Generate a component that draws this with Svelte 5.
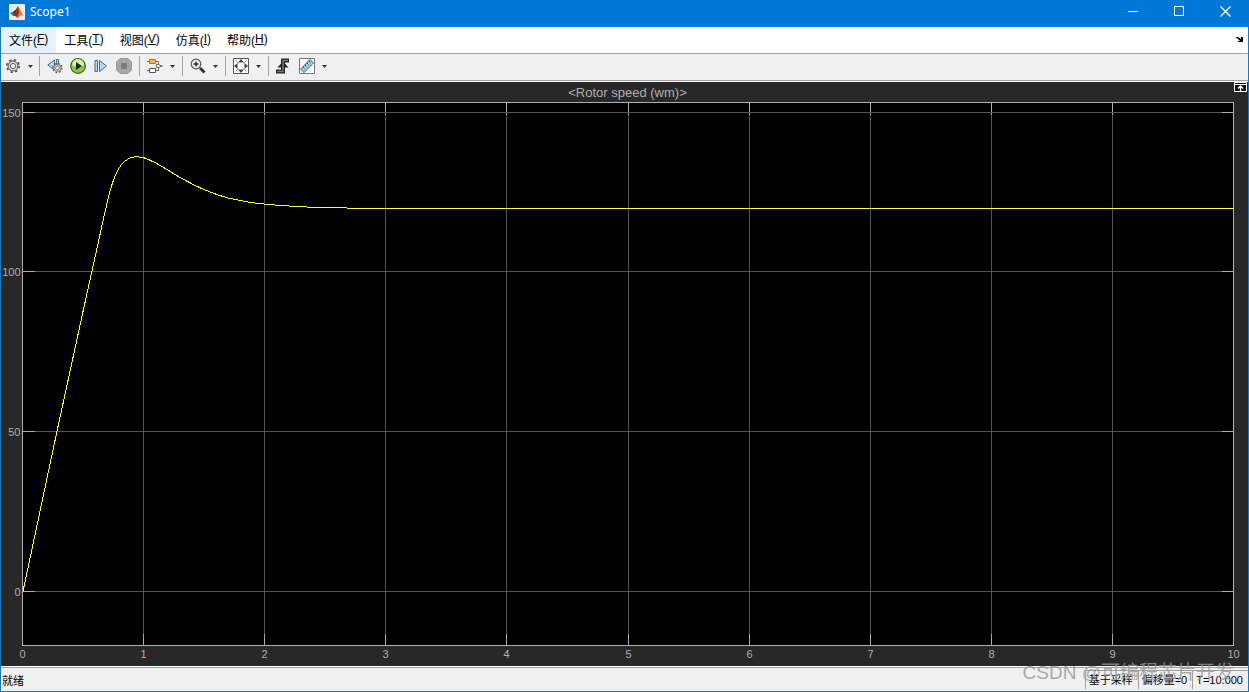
<script>
  const menus = [
    { label: "文件", key: "F" },
    { label: "工具", key: "T" },
    { label: "视图", key: "V" },
    { label: "仿真", key: "I" },
    { label: "帮助", key: "H" },
  ];

  const xTicks = [0, 1, 2, 3, 4, 5, 6, 7, 8, 9, 10];
  const yTicks = [0, 50, 100, 150];
  const yMin = -17;
  const yMax = 153;

  // [time, rotor speed]
  const samples = [
    [0, 0], [0.28, 50], [0.495, 87.5], [0.567, 99.8], [0.658, 115.5],
    [0.713, 124.4], [0.754, 129.4], [0.81, 133.4], [0.878, 135.6],
    [0.933, 136], [1, 135.7], [1.1, 134], [1.195, 131.9], [1.305, 129.4],
    [1.47, 126.2], [1.66, 123.5], [1.855, 121.9], [2, 121.2], [2.13, 120.8],
    [2.35, 120.3], [2.78, 119.9], [4, 119.9], [10, 119.9],
  ];

  let width = $state(1247);
  let height = $state(583);

  const left = 21;
  const top = 20;
  const tick = 12;
  let right = $derived(width - 15);
  let bottom = $derived(height - 21);

  const sx = (v) => Math.round(left + (v / 10) * (right - left));
  const sy = (v) => bottom - ((v - yMin) / (yMax - yMin)) * (bottom - top);

  // Catmull-Rom spline through the samples
  function curve() {
    const p = samples.map(([t, v]) => [
      left + (t / 10) * (right - left) + 1,
      sy(v) + 0.6,
    ]);
    let d = `M${p[0]}`;
    for (let i = 0; i < p.length - 1; i++) {
      const a = p[i - 1] ?? p[i];
      const b = p[i];
      const c = p[i + 1];
      const e = p[i + 2] ?? c;
      if (i < 3 || i > 18) {
        d += `L${c}`;
        continue;
      }
      d += `C${b[0] + (c[0] - a[0]) / 6},${b[1] + (c[1] - a[1]) / 6} `;
      d += `${c[0] - (e[0] - b[0]) / 6},${c[1] - (e[1] - b[1]) / 6} ${c}`;
    }
    return d;
  }

  let trace = $derived(curve());
</script>

{#snippet gear()}
  <circle cx="8" cy="8" r="6.200" fill="none" stroke="#555" stroke-width="1.600" stroke-dasharray="2.4 2.470" />
  <circle cx="8" cy="8" r="5" fill="#d4d4d4" stroke="#555" />
  <circle cx="8" cy="8" r="2.500" fill="#fff" stroke="#555" />
{/snippet}

{#snippet drop(label)}
  <button class="drop" aria-label={label}>
    <svg width="5" height="3" viewBox="0 0 5 3"><path d="M0 0h5L2.5 3z" fill="#333" /></svg>
  </button>
{/snippet}

<div class="window">
  <header class="titlebar">
    <svg class="logo" width="16" height="16" viewBox="0 0 16 16">
      <rect width="16" height="16" rx="1" fill="#eee" />
      <path d="M1 9l4-2 2 2-3 3z" fill="#2f7fb5" />
      <path d="M5 7c2-1 3-4 4-5l-2 8-3 2z" fill="#6a2c2a" />
      <path d="M9 2c2 2 3 7 6 10-2-1-3-1-4 0s-2 2-3 2c0-2-2-2-4-2 3-1 4-5 5-10z" fill="#e8743a" />
      <path d="M9 2l1 6-2 6c0-2-2-2-4-2 3-1 4-5 5-10z" fill="#9c2b1a" />
    </svg>
    <h1>Scope1</h1>
    <div class="window-buttons">
      <button aria-label="Minimize">
        <svg width="11" height="11" viewBox="0 0 11 11"><path d="M0 5.5h10" /></svg>
      </button>
      <button aria-label="Maximize">
        <svg width="11" height="11" viewBox="0 0 11 11"><path d="M.5.5h9v9h-9z" /></svg>
      </button>
      <button aria-label="Close">
        <svg width="11" height="11" viewBox="0 0 11 11"><path d="M.5.5l10 10M10.5.5l-10 10" stroke-width="1.300" /></svg>
      </button>
    </div>
  </header>

  <nav class="menubar">
    {#each menus as menu, i}
      <button class:active={i === 0}>{menu.label}(<u>{menu.key}</u>)</button>
    {/each}
    <button class="dock" aria-label="Dock">
      <svg width="7" height="6" viewBox="0 0 7 6">
        <path d="M0 1h2l3 2V1h2v5H2V5h2L1 2H0z" fill="#000" />
      </svg>
    </button>
  </nav>

  <div class="toolbar">
    <div class="group">
      <button aria-label="Configuration">
        <svg width="16" height="16" viewBox="0 0 16 16">{@render gear()}</svg>
      </button>
      {@render drop("Configuration options")}
    </div>
    <div class="group run">
      <button aria-label="Step back options">
        <svg width="16" height="16" viewBox="0 0 16 16">
          <path d="M7.500 2v10L.8 7z" fill="#b8d8ea" stroke="#46708c" />
          <path d="M9.500 1.500h2v11h-2z" fill="#b8d8ea" stroke="#46708c" />
          <g transform="translate(4.500 4) scale(.74)">{@render gear()}</g>
        </svg>
      </button>
      <button aria-label="Run">
        <svg width="16" height="16" viewBox="0 0 16 16">
          <circle cx="8" cy="8" r="7.300" fill="#91c73d" stroke="#3f661d" stroke-width="1.200" />
          <path d="M2 7a6 6 0 0 1 12 0q-6 3-12 0z" fill="#d9eeb5" />
          <path d="M6 4l6 4-6 4z" fill="#1d2b12" />
        </svg>
      </button>
      <button aria-label="Step forward">
        <svg width="16" height="16" viewBox="0 0 16 16">
          <path d="M2 2.500h2.500v11H2zM6.500 2.500l7 5.500-7 5.500z" fill="#b7dcf0" stroke="#3c6f95" />
        </svg>
      </button>
      <button aria-label="Stop" disabled>
        <svg width="16" height="16" viewBox="0 0 16 16">
          <path d="M4 .5h8L15.500 4v8L12 15.500H4L.5 12V4z" fill="#a6a6a6" stroke="#999" />
          <path d="M5 5h6v6H5z" fill="#7c7c7c" />
        </svg>
      </button>
    </div>
    <div class="group">
      <button aria-label="Highlight block">
        <svg width="16" height="16" viewBox="0 0 16 16">
          <path d="M0 3.500h2M8 3.500h3.500v3M0 12.500h2M8 12.500h3.500v-3M14 8h2" fill="none" stroke="#666" />
          <path d="M2.500 1.500h6v4h-6z" fill="#f9b55b" stroke="#d4660c" />
          <path d="M2.500 10.500h6v4h-6z" fill="#fff" stroke="#555" />
          <path d="M9.500 6.500h2l3 1.500-3 1.500h-2z" fill="#fff" stroke="#666" />
        </svg>
      </button>
      {@render drop("Signal options")}
    </div>
    <div class="group">
      <button aria-label="Zoom">
        <svg width="16" height="16" viewBox="0 0 16 16">
          <circle cx="6" cy="6" r="4.800" fill="#e9f3f7" stroke="#555" stroke-width="1.200" />
          <path d="M6 3.500v5M3.500 6h5" stroke="#222" stroke-width="1.400" />
          <path d="M10 10l4.500 4.500" stroke="#333" stroke-width="2.800" />
        </svg>
      </button>
      {@render drop("Zoom options")}
    </div>
    <div class="group">
      <button aria-label="Fit to view">
        <svg width="16" height="16" viewBox="0 0 16 16">
          <path d="M.5.5h15v15H.5z" fill="#fff" stroke="#555" />
          <path d="M8 1l3 3.500H5zM8 15l3-3.500H5zM1 8l3.500-3v6zM15 8l-3.500-3v6z" fill="#444" />
          <path d="M2.500 2.500l3 3M13.500 2.500l-3 3M2.500 13.500l3-3M13.500 13.500l-3-3" stroke="#999" />
        </svg>
      </button>
      {@render drop("Scale options")}
    </div>
    <div class="group tools">
      <button aria-label="Triggers">
        <svg width="16" height="16" viewBox="0 0 16 16">
          <path d="M1 13.500h7v-11h6" fill="none" stroke="#222" stroke-width="4" />
          <path d="M8 3.500L13.500 9.500h-11z" fill="#222" />
          <path d="M2 13.500h6v-11h5" fill="none" stroke="#777" stroke-width="1.500" />
        </svg>
      </button>
      <button aria-label="Measurements">
        <svg width="16" height="16" viewBox="0 0 16 16">
          <path d="M.5.5h15v15H.5z" fill="#fff" stroke="#777" />
          <path d="M11 1.500L14.500 5 5 14.500 1.500 11z" fill="#a3cfe2" stroke="#35657f" />
          <path d="M4 9l1.500 1.500M6 7l1.500 1.500M8 5l1.500 1.500M10 3l1.500 1.500" stroke="#24516a" />
        </svg>
      </button>
      {@render drop("Measurement options")}
    </div>
  </div>

  <main class="scope" bind:clientWidth={width} bind:clientHeight={height}>
    <svg class="plot" {width} {height} role="img" aria-label="Rotor speed">
      <rect x={left} y={top} width={right - left} height={bottom - top} />
      <g transform="translate(.5 .5)">
        {#each xTicks as t}
          <path class="grid" d="M{sx(t)} {top}V{bottom}" />
          <path class="axis" d="M{sx(t)} {top}v{tick}M{sx(t)} {bottom}v-{tick}" />
          <text x={sx(t)} y={bottom + 12} text-anchor="middle">{t}</text>
        {/each}
        {#each yTicks as v}
          <path class="grid" d="M{left} {Math.round(sy(v))}H{right}" />
          <path class="axis" d="M{left} {Math.round(sy(v))}h{tick}M{right} {Math.round(sy(v))}h-{tick}" />
          <text x={left - 2} y={Math.round(sy(v)) + 4} text-anchor="end">{v}</text>
        {/each}
        <path class="axis" d="M{left} {top}H{right}V{bottom}H{left}z" />
      </g>
      <path class="trace" d={trace} />
      <text class="title" x={(left + right) / 2} y="15" text-anchor="middle">&lt;Rotor speed (wm)&gt;</text>
    </svg>
    <button class="maximize-axes" aria-label="Maximize axes">
      <svg width="13" height="11" viewBox="0 0 13 11">
        <path d="M.5.5h12v9H.5zM0 2.500h13" fill="#111" stroke="#fff" />
        <path d="M6.500 9V4M4 6.500L6.500 4 9 6.500" fill="none" stroke="#fff" stroke-width="1.300" />
      </svg>
    </button>
  </main>

  <footer class="statusbar">
    <span class="ready">就绪</span>
    <span class="cell">基于采样</span>
    <span class="cell">偏移量=0</span>
    <span class="cell">T=10.000</span>
    <span class="watermark">CSDN @可编程芯片开发</span>
  </footer>
</div>

<style>
  :global(body) {
    margin: 0;
    background: #282828;
  }

  .window {
    display: flex;
    flex-direction: column;
    box-sizing: border-box;
    min-height: 100vh;
    border: 1px solid #1879bd;
    border-top: none;
    font-family: "Liberation Sans", "Noto Sans CJK SC", sans-serif;
    font-size: 12px;
    color: #000;
  }

  button {
    display: flex;
    align-items: center;
    justify-content: center;
    padding: 0;
    border: none;
    background: transparent;
    font: inherit;
    color: inherit;
  }

  svg {
    display: block;
  }

  .titlebar {
    display: flex;
    align-items: center;
    box-sizing: border-box;
    height: 27px;
    margin: 0 -1px;
    padding: 0 1px 4px 9px;
    background: #0078d7;
    color: #fff;
  }

  .titlebar h1 {
    flex: 1;
    margin: 0 0 0 5px;
    font-family: "Noto Sans", sans-serif;
    font-size: 12px;
    font-weight: 400;
  }

  .window-buttons {
    display: flex;
    height: 23px;
  }

  .window-buttons button {
    width: 46px;
  }

  .window-buttons path {
    fill: none;
    stroke: #fff;
  }

  .menubar {
    display: flex;
    height: 26px;
    background: #fff;
    border-bottom: 1px solid #a0a0a0;
  }

  .menubar button {
    padding: 0 8px 2px;
  }

  .menubar .active {
    background: #e5f3ff;
  }

  .menubar .dock {
    margin-left: auto;
    padding: 0 5px 2px;
  }

  .toolbar {
    display: flex;
    align-items: center;
    box-sizing: border-box;
    height: 27px;
    padding-bottom: 2px;
    background: #f0f0f0;
    border-bottom: 1px solid #a0a0a0;
    box-shadow: 0 1px #fff;
    margin-bottom: 1px;
  }

  .group {
    display: flex;
    align-items: center;
    height: 20px;
    padding: 0 4px 0 7px;
    border-right: 1px solid #a0a0a0;
  }

  .group:first-child {
    padding: 0 3px 0 4px;
  }

  .group.run {
    gap: 7px;
    padding-right: 7px;
  }

  .group.tools {
    padding-left: 6px;
    border-right: none;
  }

  .tools button + button:not(.drop) {
    margin-left: 8px;
  }

  .drop {
    width: 15px;
    height: 16px;
    padding-left: 3px;
  }

  .scope {
    position: relative;
    flex: 1;
    min-height: 240px;
    overflow: hidden;
    background: #282828;
  }

  .plot {
    position: absolute;
    inset: 0;
  }

  .plot text {
    fill: #afafaf;
    font-size: 11px;
  }

  .plot .title {
    font-size: 13px;
  }

  .grid,
  .axis,
  .trace {
    fill: none;
    shape-rendering: crispEdges;
  }

  .grid {
    stroke: #555;
  }

  .axis {
    stroke: #afafaf;
  }

  .trace {
    stroke: #ffff3c;
  }

  .maximize-axes {
    position: absolute;
    top: 0;
    right: 1px;
  }

  .statusbar {
    position: relative;
    display: flex;
    align-items: center;
    height: 23px;
    background: #f0f0f0;
    border-top: 1px solid #a0a0a0;
    box-shadow: 0 -1px #fff;
    margin-top: 1px;
    font-size: 11px;
  }

  .ready {
    flex: 1;
    padding-left: 1px;
  }

  .cell {
    height: 18px;
    line-height: 18px;
    padding: 0 5px 0 3px;
    border-left: 1px solid #a0a0a0;
    border-top: 1px solid #a0a0a0;
  }

  .watermark {
    position: absolute;
    right: 14px;
    bottom: 4px;
    font-size: 19px;
    line-height: 28px;
    color: rgba(150, 150, 150, 0.8);
    pointer-events: none;
  }
</style>
